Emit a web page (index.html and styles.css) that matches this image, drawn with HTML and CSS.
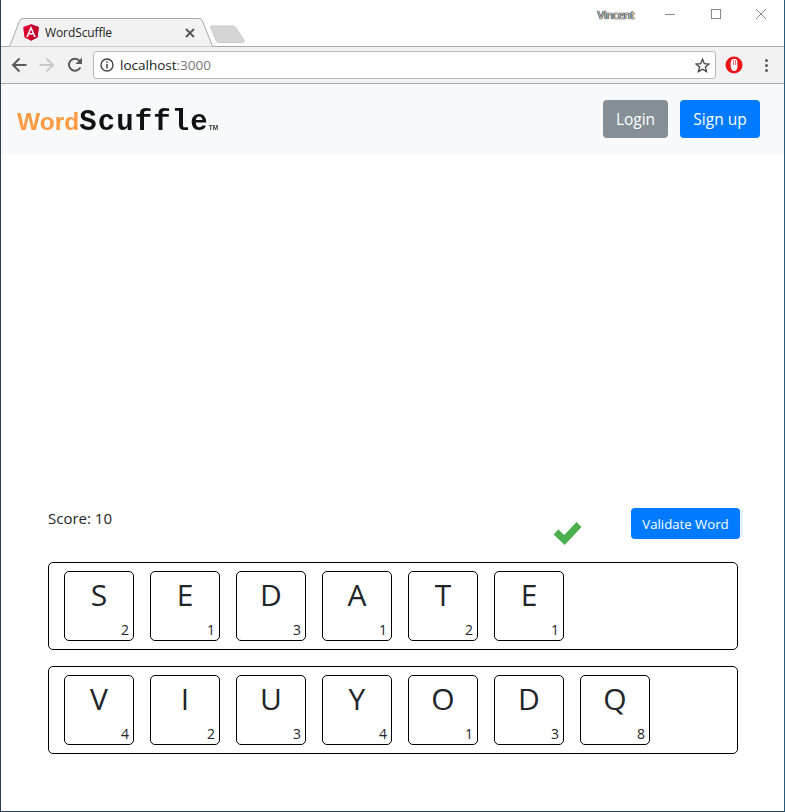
FILE: index.html
```html
<!DOCTYPE html>
<html lang="en">
<head>
    <meta charset="UTF-8">
    <title>WordScuffle</title>
    <link rel="stylesheet" href="styles.css">
</head>
<body>
<div class="window">
    <div class="tabstrip">
        <div class="tab">
            <svg class="tab-shape" width="208" height="29" viewBox="0 0 208 29">
                <path d="M0 28.5 L1 28.5 Q2.5 28.5 3.2 27 L12.5 3 Q13.5 .5 16 .5 L192 .5 Q194.5 .5 195.5 3 L205 27 Q205.6 28.5 207 28.5 L208 28.5" fill="#f2f2f2" stroke="#a9a9a9"/>
            </svg>
            <svg class="favicon" width="16" height="17" viewBox="30 28 190 204">
                <polygon points="125,30 31.9,63.2 46.1,186.3 125,230 203.9,186.3 218.1,63.2" fill="#dd0031"/>
                <polygon points="125,30 125,230 203.9,186.3 218.1,63.2" fill="#c3002f"/>
                <path d="M125 52.1L66.8 182.6h21.7l11.7-29.2h49.4l11.7 29.2H183L125 52.1zm17 83.3h-34l17-40.9 17 40.9z" fill="#fff"/>
            </svg>
            <span class="tab-title">WordScuffle</span>
            <svg class="tab-close" width="10" height="10" viewBox="0 0 10 10">
                <path d="M1 1 L9 9 M9 1 L1 9" stroke="#555" stroke-width="1.8"/>
            </svg>
        </div>
        <svg class="newtab" width="36" height="19" viewBox="0 0 36 19">
            <path d="M1.5 1 L23 1 Q25 1 26 3 L34 15 Q35 17.5 32 17.5 L9 17.5 Q7 17.5 6 15.5 L.8 2.5 Q.5 1 1.5 1z" fill="#d5d5d5" stroke="#c8c8c8"/>
        </svg>
        <span class="user">Vincent</span>
        <div class="winctl">
            <svg width="10" height="10" viewBox="0 0 10 10"><path d="M0 5.5 H10" stroke="#888"/></svg>
            <svg width="10" height="10" viewBox="0 0 10 10"><rect x=".5" y=".5" width="9" height="9" fill="none" stroke="#888"/></svg>
            <svg width="10" height="10" viewBox="0 0 10 10"><path d="M0 0 L10 10 M10 0 L0 10" stroke="#888"/></svg>
        </div>
    </div>

    <div class="toolbar">
        <svg class="tool" width="16" height="16" viewBox="0 0 16 16"><path d="M15.5 8 H2 M8.5 1.5 L2 8 L8.5 14.5" fill="none" stroke="#5a5a5a" stroke-width="2"/></svg>
        <svg class="tool" width="16" height="16" viewBox="0 0 16 16"><path d="M.5 8 H14 M7.5 1.5 L14 8 L7.5 14.5" fill="none" stroke="#c9c9c9" stroke-width="2"/></svg>
        <svg class="tool" width="16" height="16" viewBox="0 0 16 16"><path d="M13.3 10.5 A6 6 0 1 1 12.6 3.9" fill="none" stroke="#5a5a5a" stroke-width="2"/><path d="M15 .5 V7 H8.5z" fill="#5a5a5a"/></svg>
        <div class="omnibox">
            <svg width="14" height="14" viewBox="0 0 14 14"><circle cx="7" cy="7" r="6" fill="none" stroke="#444" stroke-width="1.4"/><path d="M7 6 V10.5 M7 3.2 V4.8" stroke="#444" stroke-width="1.5"/></svg>
            <span class="url">localhost<span class="url-port">:3000</span></span>
            <svg class="star" width="15" height="15" viewBox="0 0 15 15"><path d="M7.5 1.3 L9.3 5.6 L14 6 L10.4 9 L11.5 13.6 L7.5 11.2 L3.5 13.6 L4.6 9 L1 6 L5.7 5.6z" fill="none" stroke="#444" stroke-width="1.3"/></svg>
        </div>
        <svg class="adblock" width="18" height="18" viewBox="0 0 18 18">
            <ellipse cx="9" cy="9" rx="8.5" ry="8.5" fill="#e8141a"/>
            <path d="M5.5 7 L6.5 4 Q7 3 8 3 L10.5 3 Q12 3 12.2 4.5 L12.5 11 Q12 15 9 15 Q6.5 15 5.8 11z" fill="#fff"/>
            <path d="M8.5 4 V9 M10.5 4 V9" stroke="#e8141a" stroke-width=".6"/>
        </svg>
        <div class="dots"><i></i><i></i><i></i></div>
    </div>

    <nav class="navbar">
        <div class="logo"><span class="logo-word">Word</span><span class="logo-scuffle">Scuffle</span><span class="logo-tm">TM</span></div>
        <div class="nav-buttons">
            <button class="btn btn-secondary btn-login">Login</button>
            <button class="btn btn-primary btn-signup">Sign up</button>
        </div>
    </nav>

    <main class="game">
        <div class="score-row">
            <div class="score">Score: 10</div>
            <svg class="check" width="29" height="24" viewBox="0 0 29 24"><path d="M3 11 L11.5 19 L26 3.5" fill="none" stroke="#4caf50" stroke-width="7"/></svg>
            <button class="btn btn-primary btn-validate">Validate Word</button>
        </div>

        <div class="rack">
            <div class="tile"><div class="letter">S</div><div class="points">2</div></div>
            <div class="tile"><div class="letter">E</div><div class="points">1</div></div>
            <div class="tile"><div class="letter">D</div><div class="points">3</div></div>
            <div class="tile"><div class="letter">A</div><div class="points">1</div></div>
            <div class="tile"><div class="letter">T</div><div class="points">2</div></div>
            <div class="tile"><div class="letter">E</div><div class="points">1</div></div>
        </div>

        <div class="rack">
            <div class="tile"><div class="letter">V</div><div class="points">4</div></div>
            <div class="tile"><div class="letter">I</div><div class="points">2</div></div>
            <div class="tile"><div class="letter">U</div><div class="points">3</div></div>
            <div class="tile"><div class="letter">Y</div><div class="points">4</div></div>
            <div class="tile"><div class="letter">O</div><div class="points">1</div></div>
            <div class="tile"><div class="letter">D</div><div class="points">3</div></div>
            <div class="tile"><div class="letter">Q</div><div class="points">8</div></div>
        </div>
    </main>
</div>
</body>
</html>
```

FILE: styles.css
```css
* {
    box-sizing: border-box;
}

body {
    margin: 0;
    background: #fff;
    color: #212529;
    font-family: "Open Sans", "Noto Sans", sans-serif;
}

.window {
    width: 785px;
    height: 812px;
    display: flex;
    flex-direction: column;
    overflow: hidden;
    border-left: 1px solid #2b4257;
    border-right: 1px solid #2b5a78;
    border-bottom: 1px solid #2b4257;
}

/* browser chrome */
.tabstrip {
    height: 47px;
    flex: none;
    display: flex;
    align-items: flex-start;
    border-bottom: 1px solid #a9a9a9;
    padding-left: 6px;
}

.tab {
    position: relative;
    width: 208px;
    height: 29px;
    margin-top: 18px;
    display: flex;
    align-items: center;
    padding: 0 16px;
    z-index: 1;
}

.tab-shape {
    position: absolute;
    left: 0;
    top: 0;
}

.favicon,
.tab-title,
.tab-close {
    position: relative;
}

.tab-title {
    margin-left: 6px;
    font-size: 12px;
    color: #222;
    letter-spacing: -.1px;
}

.tab-close {
    margin-left: auto;
    margin-right: 4px;
}

.newtab {
    margin: 25px 0 0 -5px;
}

.user {
    margin: 7px 0 0 auto;
    font-size: 11.5px;
    line-height: 16px;
    letter-spacing: -.5px;
    color: #ddd;
    text-shadow: 0 0 1px #000, 0 0 1px #000, 0 0 1px #000;
}

.winctl {
    display: flex;
    gap: 35.5px;
    margin: 9px 18px 0 31px;
}

.toolbar {
    height: 37px;
    flex: none;
    display: flex;
    align-items: center;
    background: #f2f2f2;
    border-bottom: 1px solid #a9a9a9;
    padding-left: 10px;
}

.tool {
    margin-right: 12px;
}

.omnibox {
    width: 623px;
    height: 28px;
    margin-left: -2px;
    display: flex;
    align-items: center;
    gap: 6px;
    padding: 0 5px 0 6px;
    background: #fff;
    border: 1px solid #b9b9b9;
    border-radius: 3px;
}

.url {
    font-size: 13.5px;
    color: #222;
}

.url-port {
    color: #777;
}

.star {
    margin-left: auto;
}

.adblock {
    margin-left: 9px;
}

.dots {
    display: flex;
    flex-direction: column;
    gap: 2px;
    margin-left: 22px;
}

.dots i {
    width: 3px;
    height: 3px;
    background: #5a5a5a;
    border-radius: 50%;
}

/* page */
.navbar {
    height: 70px;
    flex: none;
    display: flex;
    align-items: center;
    justify-content: space-between;
    background: #f8f9fa;
    padding: 0 24px 0 16px;
}

.logo {
    display: flex;
    align-items: baseline;
    margin-top: 6px;
    filter: blur(.4px);
}

.logo-word {
    font-family: "Liberation Sans", sans-serif;
    font-weight: 700;
    font-size: 24.5px;
    color: #fd9a43;
}

.logo-scuffle {
    font-family: "Liberation Mono", monospace;
    font-weight: 700;
    font-size: 29px;
    letter-spacing: 1.1px;
    color: #111;
}

.logo-tm {
    font-family: "Liberation Sans", sans-serif;
    font-weight: 700;
    font-size: 6.5px;
    color: #333;
}

.nav-buttons {
    display: flex;
    gap: 12px;
}

.btn {
    height: 38px;
    padding: 0;
    border: none;
    border-radius: 4px;
    color: #fff;
    font-family: inherit;
    font-size: 15.5px;
}

.btn-login {
    width: 65px;
}

.btn-signup {
    width: 80px;
}

.btn-primary {
    background: #007bff;
}

.btn-secondary {
    background: #868e96;
}

.game {
    flex: 1;
    display: flex;
    flex-direction: column;
    justify-content: flex-end;
    gap: 16px;
    padding: 0 46px 57px 47px;
}

.score-row {
    height: 37px;
    margin: 0 -2px 1px 0;
    display: flex;
    align-items: flex-start;
}

.score {
    font-size: 15px;
    line-height: 20px;
}

.check {
    margin-left: auto;
    align-self: flex-end;
}

.btn-validate {
    width: 109px;
    height: 31px;
    margin-left: 49px;
    font-size: 13.2px;
    box-shadow: 3px 0 0 #e6f0fd;
}

.rack {
    height: 88px;
    display: flex;
    gap: 16px;
    padding: 8px 15px;
    border: 1px solid #000;
    border-radius: 5px;
}

.tile {
    width: 70px;
    height: 70px;
    display: flex;
    flex-direction: column;
    border: 1px solid #000;
    border-radius: 5px;
}

.letter {
    height: 48px;
    font-size: 30px;
    line-height: 46px;
    text-align: center;
}

.points {
    padding-right: 4px;
    font-size: 14px;
    line-height: 19px;
    text-align: right;
}
```
